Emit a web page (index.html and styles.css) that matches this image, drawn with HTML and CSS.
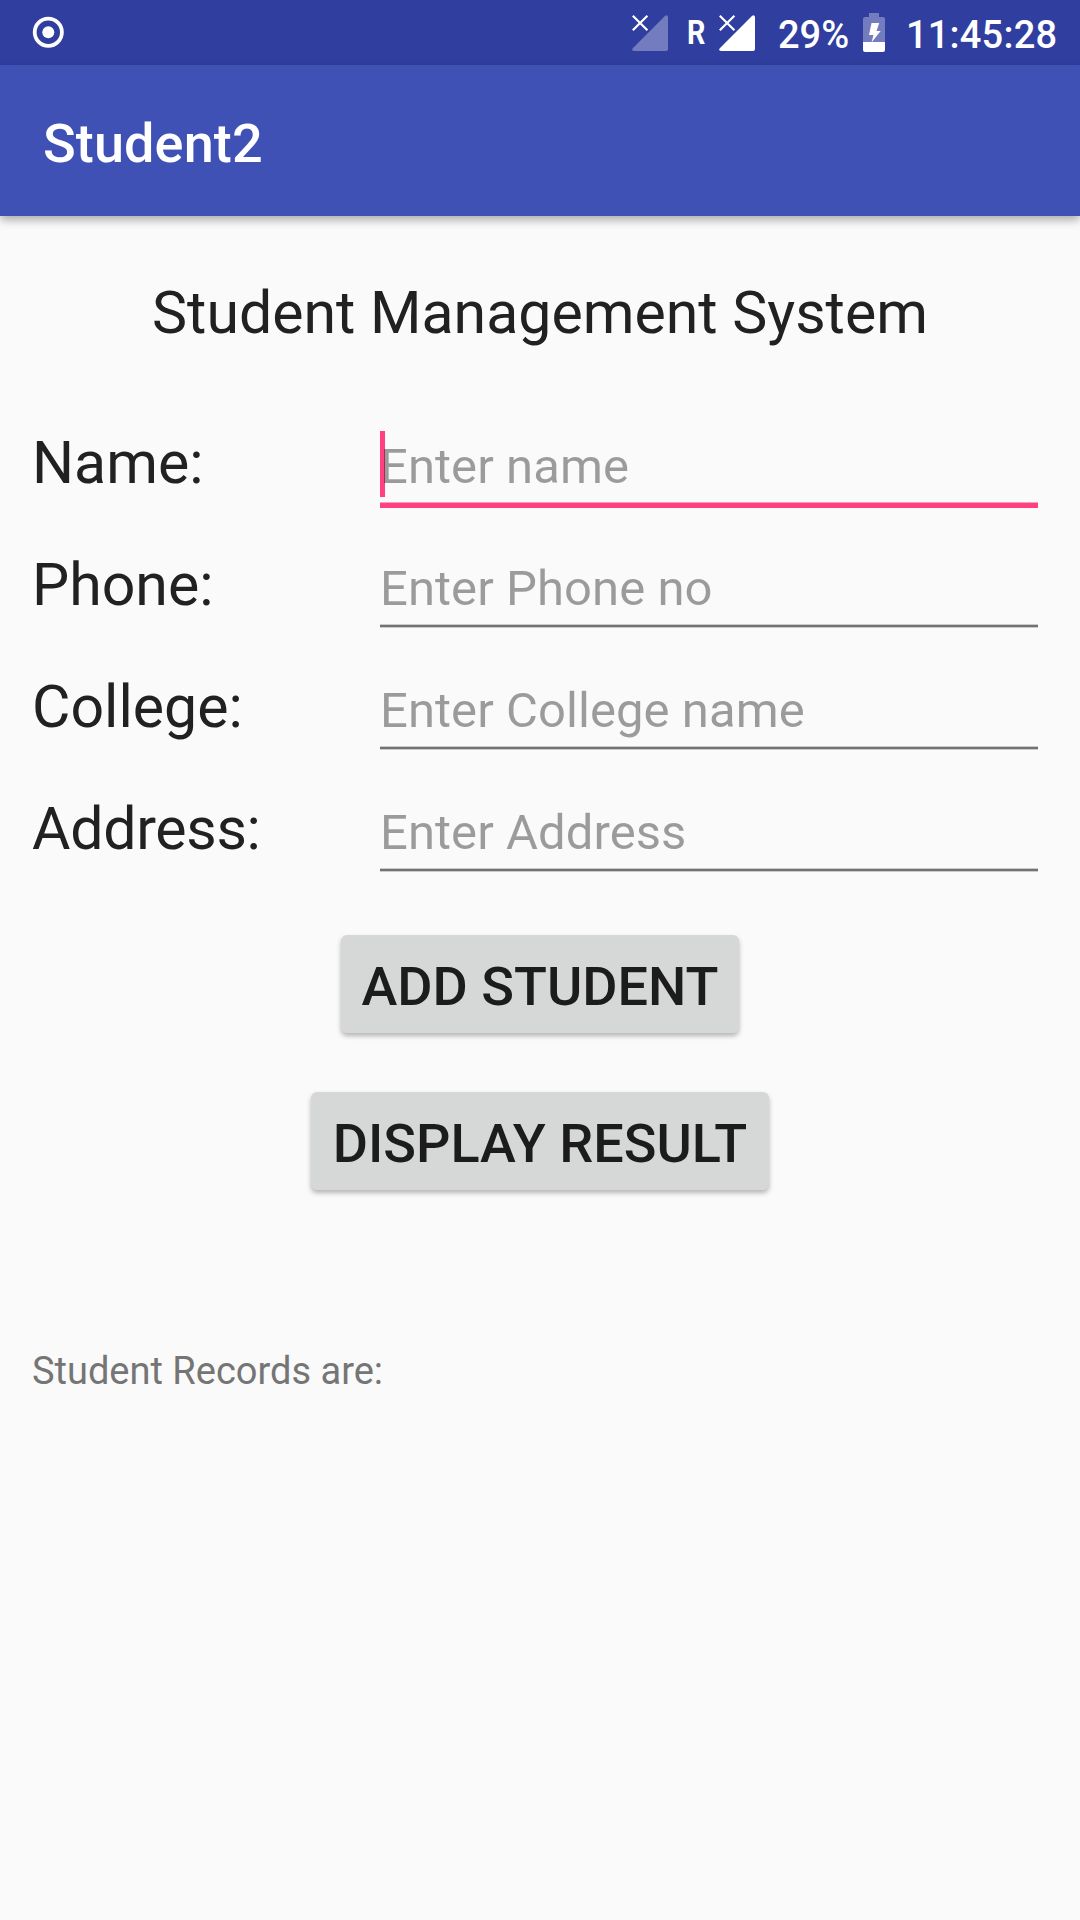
FILE: index.html
```
<!DOCTYPE html>
<html lang="en">
<head>
<meta charset="utf-8">
<title>Student2</title>
<link rel="stylesheet" href="styles.css">
</head>
<body>
<div class="screen">
  <div class="status-bar">
    <svg class="icon-record" width="32" height="32" viewBox="0 0 32 32">
      <circle cx="16.300" cy="16.300" r="13.600" fill="none" stroke="#fff" stroke-width="3.800"/>
      <circle cx="16.300" cy="16.300" r="6" fill="#fff"/>
    </svg>
    <svg class="icon-signal" width="36" height="36" viewBox="0 0 36 36">
      <path d="M36 2v32q0 2-2 2H2q-3-.6-1.200-2.800L33.200.8Q35.400-.8 36 2z" fill="#fff" fill-opacity=".32"/>
      <path d="M.8.8l14.600 14.400M15.400.8L.8 15.200" stroke="#fff" stroke-width="2.200"/>
    </svg>
    <span class="roaming">R</span>
    <svg class="icon-signal-2" width="36" height="36" viewBox="0 0 36 36">
      <path d="M36 2v32q0 2-2 2H2q-3-.6-1.200-2.800L33.200.8Q35.400-.8 36 2z" fill="#fff"/>
      <path d="M.8.8l14.600 14.400M15.400.8L.8 15.200" stroke="#fff" stroke-width="2.200"/>
    </svg>
    <span class="battery-level">29%</span>
    <svg class="icon-battery" width="22" height="39" viewBox="0 0 22 39">
      <path d="M6 0h10v4h4q2 0 2 2v23H0V6q0-2 2-2h4z" fill="#fff" fill-opacity=".32"/>
      <path d="M0 29h22v8q0 2-2 2H2q-2 0-2-2z" fill="#fff"/>
      <path d="M8.500 10h7.700l-2.700 8h4.200L8.500 29.500l2-7.500H6z" fill="#fff"/>
    </svg>
    <span class="clock">11:45:28</span>
  </div>
  <header class="app-bar">Student2</header>
  <main class="content">
    <h1 class="heading">Student Management System</h1>
    <form class="form">
      <div class="row">
        <label class="label" for="name">Name:</label>
        <div class="field field-focused"><span class="cursor"></span><input class="input" id="name" placeholder="Enter name"></div>
      </div>
      <div class="row">
        <label class="label" for="phone">Phone:</label>
        <div class="field"><input class="input" id="phone" placeholder="Enter Phone no"></div>
      </div>
      <div class="row">
        <label class="label" for="college">College:</label>
        <div class="field"><input class="input" id="college" placeholder="Enter College name"></div>
      </div>
      <div class="row">
        <label class="label label-tight" for="address">Address:</label>
        <div class="field"><input class="input" id="address" placeholder="Enter Address"></div>
      </div>
      <div class="actions">
        <button class="button button-add" type="button">ADD STUDENT</button>
        <button class="button button-display" type="button">DISPLAY RESULT</button>
      </div>
    </form>
    <p class="records">Student Records are:</p>
  </main>
</div>
</body>
</html>
```
FILE: styles.css
```
* {
  box-sizing: border-box;
}

body {
  margin: 0;
  background: #fafafa;
  font-family: Roboto, sans-serif;
}

.screen {
  display: flex;
  flex-direction: column;
  width: 1080px;
  height: 1920px;
  overflow: hidden;
}

.status-bar {
  display: flex;
  height: 65px;
  padding: 0 22px 0 32px;
  background: #303e9f;
  color: #fff;
  font-size: 38px;
  font-weight: 500;
  line-height: 70px;
  white-space: nowrap;
}

.status-bar svg {
  flex: none;
}

.icon-record {
  margin-top: 16px;
  margin-right: auto;
}

.icon-signal,
.icon-signal-2 {
  margin-top: 15px;
}

.roaming {
  width: 17px;
  margin: 0 15px 0 19px;
  font-size: 33px;
  font-weight: 700;
  line-height: 65px;
  transform: scaleX(.87);
  transform-origin: left;
}

.battery-level {
  width: 73px;
  margin-left: 23px;
}

.icon-battery {
  margin: 13px 21px 0 12px;
}

.clock {
  width: 152px;
  letter-spacing: .2px;
}

.app-bar {
  position: relative;
  height: 151px;
  padding-left: 43px;
  background: #3f51b5;
  box-shadow: 0 4px 9px rgba(0, 0, 0, .32);
  color: #fff;
  font-size: 54px;
  font-weight: 500;
  line-height: 157px;
  letter-spacing: .12px;
}

.content {
  padding: 62px 32px 0;
}

.heading {
  margin: 0 0 54px;
  color: #212121;
  font-size: 59px;
  font-weight: 400;
  line-height: 70px;
  text-align: center;
}

.row {
  display: grid;
  grid-template-columns: 348px 658px;
  height: 122px;
}

.label {
  color: #212121;
  font-size: 59px;
  line-height: 122px;
}

.label-tight {
  letter-spacing: -.3px;
}

.field {
  position: relative;
  height: 77px;
  margin-top: 29px;
}

.field::after {
  content: "";
  display: block;
  height: 4px;
  background: linear-gradient(#cbcbcb 1px, #727272 1px 3px, #cbcbcb 3px);
}

.field-focused::after {
  height: 6px;
  background: linear-gradient(#ff9dbe 1px, #ff4081 1px);
}

.input {
  position: relative;
  display: block;
  width: 100%;
  height: 71px;
  padding: 0;
  border: 0;
  outline: 0;
  background: transparent;
  font: 49px/71px Roboto, sans-serif;
  letter-spacing: .06px;
}

.input::placeholder {
  color: rgba(0, 0, 0, .38);
}

.cursor {
  position: absolute;
  top: 0;
  left: 0;
  width: 5px;
  height: 66px;
  background: #ff4081;
}

.actions {
  display: flex;
  flex-direction: column;
  align-items: center;
  gap: 59px;
  margin-top: 45px;
}

.button {
  height: 98px;
  padding: 5px 0 0;
  border: 0;
  border-radius: 6px;
  background: #d6d8d7;
  box-shadow: 0 3px 5px rgba(0, 0, 0, .28);
  color: #1c1c1c;
  font: 500 54px/93px Roboto, sans-serif;
}

.button-add {
  width: 398px;
}

.button-display {
  width: 458px;
}

.records {
  margin: 158px 0 0;
  color: #757575;
  font-size: 38px;
  line-height: 46px;
}
```
